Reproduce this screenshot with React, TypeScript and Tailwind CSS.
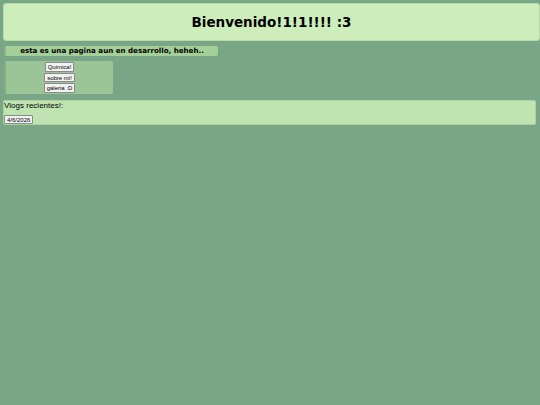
import React from "react";

const links = ["Quimica!", "sobre mi!", "galeria :D"];

export default function App() {
  return (
    <div className="min-h-[405px] bg-[#7aa688] pt-[3px] pl-[3px] font-['DejaVu_Sans',sans-serif] text-black">
      <header className="flex h-[38px] items-center justify-center rounded-[3px] border border-[#b9d9a8] bg-[#cdedbb]">
        <h1 className="text-[13.5px] font-bold">Bienvenido!1!1!!!! :3</h1>
      </header>

      <div className="mt-[5px] ml-px flex h-[10px] w-[214px] items-center justify-center rounded-[2px] border-l-2 border-[#8cb584] bg-[#a5cf98]">
        <p className="text-[7.1px] font-bold leading-none">
          esta es una pagina aun en desarrollo, heheh..
        </p>
      </div>

      <nav className="mt-[5px] ml-px flex h-[33px] w-[109px] flex-col items-center justify-center gap-px rounded-[2px] border-l-2 border-[#86ad80] bg-[#9bc596]">
        {links.map((l) => (
          <button
            key={l}
            type="button"
            className="h-[9.5px] rounded-[1px] border border-[#8a8a8a] bg-[#f2f2f2] px-[2px] font-['Liberation_Sans',sans-serif] text-[6px] leading-none"
          >
            {l}
          </button>
        ))}
      </nav>

      <section className="mt-[6px] mr-[4px] flex h-[25px] flex-col items-start rounded-[2px] border border-[#acd2a0] bg-[#bfe4b2] font-['Liberation_Sans',sans-serif]">
        <p className="text-[8px] leading-[9px]">Vlogs recientes!:</p>
        <button
          type="button"
          className="mt-[5px] h-[9px] rounded-[1px] border border-[#8a8a8a] bg-[#f2f2f2] px-[2px] text-[6px] leading-none"
        >
          4/6/2026
        </button>
      </section>
    </div>
  );
}
